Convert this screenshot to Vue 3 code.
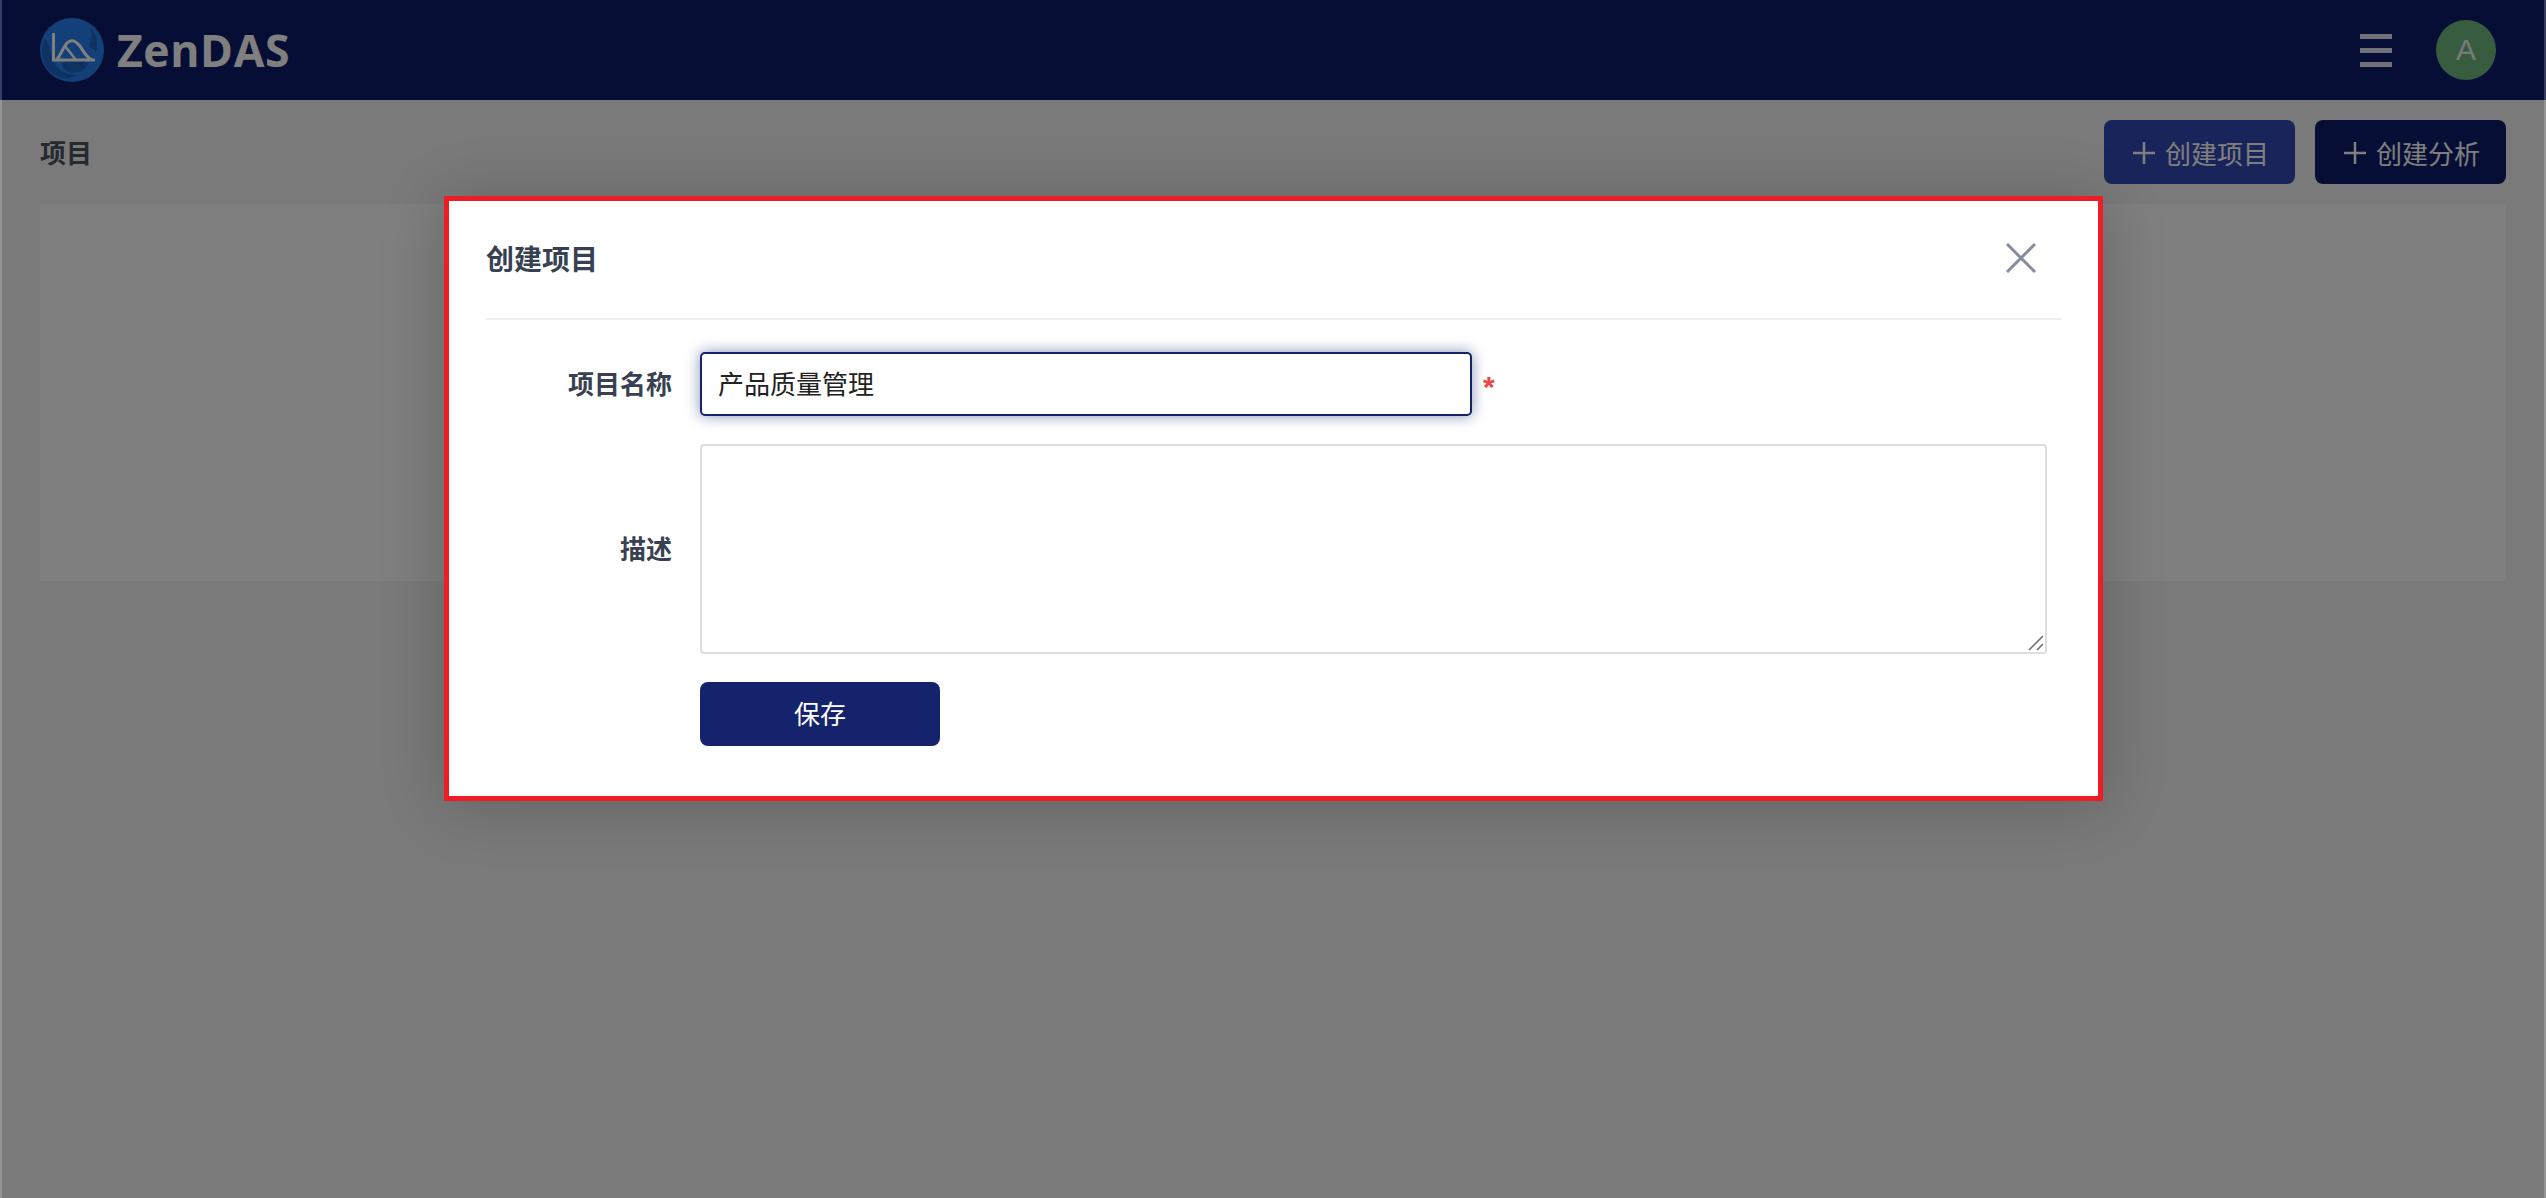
<script setup>
import { ref } from "vue";

const projectName = ref("产品质量管理");
const description = ref("");
const actions = ["创建项目", "创建分析"];
</script>

<template>
	<div class="page">
		<header class="top-bar">
			<div class="logo">
				<svg class="logo-mark" width="64" height="64" viewBox="0 0 64 64">
					<circle cx="32" cy="32" r="32" fill="#2680f0" />
					<path d="M5 20c-6 12-3 28 8 36 8 5 18 5 24 1-10 0-20-5-24-14-3-8-3-16-8-23z" fill="#1c66c6" />
					<path d="M22 46c6-8 20-6 26 0-3 6-11 10-18 8-5-1-8-4-8-8z" fill="#1c66c6" />
					<path d="M50 9c6 6 9 16 6 25-2-3-5-5-8-5 4-6 5-13 2-20z" fill="#1c66c6" />
					<path d="M13.5 15v27H55" fill="none" stroke="#fff" stroke-width="3" />
					<path d="M17 41.500C21 36 23 30 27 25c3-3 7-3 10 0 6 5 7 13 15 17" fill="none" stroke="#fff" stroke-width="3" />
					<path d="M25 28l11 14" fill="none" stroke="#fff" stroke-width="2.500" />
				</svg>
				<span class="logo-text">ZenDAS</span>
			</div>
			<div class="top-right">
				<div class="menu-icon">
					<span></span>
					<span></span>
					<span></span>
				</div>
				<div class="avatar">A</div>
			</div>
		</header>

		<main class="content">
			<div class="toolbar">
				<div class="page-title">项目</div>
				<div class="actions">
					<button
						v-for="(item, index) in actions"
						:key="item"
						class="action-btn"
						:class="{ light: index === 0 }"
					>
						<svg class="plus" width="22" height="22" viewBox="0 0 22 22">
							<path d="M11 0v22M0 11h22" stroke="#fff" stroke-width="2.500" />
						</svg>
						<span>{{ item }}</span>
					</button>
				</div>
			</div>
			<div class="card"></div>
		</main>

		<div class="overlay">
			<div class="modal">
				<div class="modal-head">
					<div class="modal-title">创建项目</div>
					<svg class="close" width="30" height="30" viewBox="0 0 30 30">
						<path d="M1 1l28 28M29 1L1 29" stroke="#868c9e" stroke-width="3" />
					</svg>
				</div>
				<form class="form" @submit.prevent>
					<div class="row">
						<label class="label">项目名称</label>
						<input v-model="projectName" class="input" type="text" />
						<span class="required">*</span>
					</div>
					<div class="row">
						<label class="label">描述</label>
						<div class="textarea-wrap">
							<textarea v-model="description" class="textarea"></textarea>
							<svg class="grip" width="16" height="16" viewBox="0 0 16 16">
								<path d="M1 15L15 1M9 15l6-6" stroke="#666" stroke-width="1.500" />
							</svg>
						</div>
					</div>
					<div class="row">
						<span class="label"></span>
						<button class="save-btn">保存</button>
					</div>
				</form>
			</div>
		</div>
	</div>
</template>

<style>
html,
body {
	margin: 0;
	background: #f4f4f4;
}
</style>

<style scoped>
.page {
	position: relative;
	min-height: 1198px;
	overflow: hidden;
	background: #f4f4f4;
	font-family: "Liberation Sans", "Noto Sans CJK SC", sans-serif;
}

.top-bar {
	display: flex;
	align-items: center;
	justify-content: space-between;
	height: 100px;
	padding: 0 50px 0 40px;
	background: #0f1d6b;
}

.logo {
	display: flex;
	align-items: center;
	gap: 13px;
}

.logo-mark {
	display: block;
}

.logo-text {
	font-family: "Open Sans", sans-serif;
	font-size: 44.5px;
	line-height: 1;
	font-weight: 700;
	letter-spacing: 0.6px;
	color: #fff;
}

.top-right {
	display: flex;
	align-items: center;
	gap: 44px;
}

.menu-icon {
	display: flex;
	flex-direction: column;
	gap: 9px;
	width: 32px;
}

.menu-icon span {
	display: block;
	height: 5px;
	background: #dfe0f0;
}

.avatar {
	display: flex;
	align-items: center;
	justify-content: center;
	width: 60px;
	height: 60px;
	border-radius: 50%;
	background: #6eb880;
	font-size: 30px;
	color: #f4f4f4;
}

.content {
	padding: 20px 40px;
}

.toolbar {
	display: flex;
	align-items: center;
	justify-content: space-between;
}

.page-title {
	padding-bottom: 2px;
	font-size: 26px;
	font-weight: bold;
	color: #4b5563;
}

.actions {
	display: flex;
	gap: 20px;
}

.action-btn {
	display: flex;
	align-items: center;
	justify-content: center;
	gap: 10px;
	width: 191px;
	height: 64px;
	padding: 0 0 0 3px;
	border: none;
	border-radius: 8px;
	background: #0f1d6b;
	font-family: inherit;
	font-size: 26px;
	color: #fff;
}

.action-btn.light {
	background: #3248b4;
}

.plus {
	margin-top: 2px;
}

.card {
	height: 377px;
	margin-top: 20px;
	background: #fff;
}

.overlay {
	position: absolute;
	top: 0;
	left: 0;
	right: 0;
	bottom: 0;
	display: flex;
	justify-content: center;
	align-items: flex-start;
	box-sizing: border-box;
	padding-top: 196px;
	border-left: 2px solid rgba(255, 255, 255, 0.2);
	border-right: 2px solid rgba(255, 255, 255, 0.2);
	background: rgba(0, 0, 0, 0.5);
}

.modal {
	box-sizing: border-box;
	width: 1659px;
	margin-left: 1px;
	padding: 0 37px;
	border: 5px solid #ee1c25;
	background: #fff;
	box-shadow: 0 4px 60px rgba(0, 0, 0, 0.2);
}

.modal-head {
	display: flex;
	align-items: center;
	justify-content: space-between;
	box-sizing: content-box;
	height: 113px;
	padding: 0 25px 4px 0;
	border-bottom: 2px solid #eee;
}

.modal-title {
	font-size: 28px;
	font-weight: bold;
	color: #374151;
}

.close {
	display: block;
}

.form {
	display: flex;
	flex-direction: column;
	gap: 28px;
	padding: 32px 0 50px;
}

.row {
	display: flex;
	align-items: center;
	gap: 28px;
}

.label {
	box-sizing: border-box;
	width: 186px;
	flex-shrink: 0;
	padding-bottom: 3px;
	text-align: right;
	font-size: 26px;
	font-weight: bold;
	color: #374151;
}

.input {
	box-sizing: border-box;
	width: 772px;
	height: 64px;
	padding: 0 16px 3px;
	border: 2px solid #14236b;
	border-radius: 5px;
	outline: none;
	box-shadow: 0 0 14px rgba(20, 35, 107, 0.5);
	font-family: inherit;
	font-size: 26px;
	color: #222;
}

.required {
	margin: 6px 0 0 -17px;
	font-size: 30px;
	font-weight: bold;
	line-height: 1;
	color: #ef4444;
}

.textarea-wrap {
	position: relative;
}

.textarea {
	display: block;
	box-sizing: border-box;
	width: 1347px;
	height: 210px;
	padding: 10px 17px;
	border: 2px solid #ddd;
	border-radius: 4px;
	outline: none;
	resize: none;
	font-family: inherit;
	font-size: 26px;
}

.grip {
	position: absolute;
	right: 3px;
	bottom: 3px;
	display: block;
}

.save-btn {
	width: 240px;
	height: 64px;
	padding: 0 0 4px;
	border: none;
	border-radius: 8px;
	background: #14236b;
	font-family: inherit;
	font-size: 26px;
	color: #fff;
}
</style>
